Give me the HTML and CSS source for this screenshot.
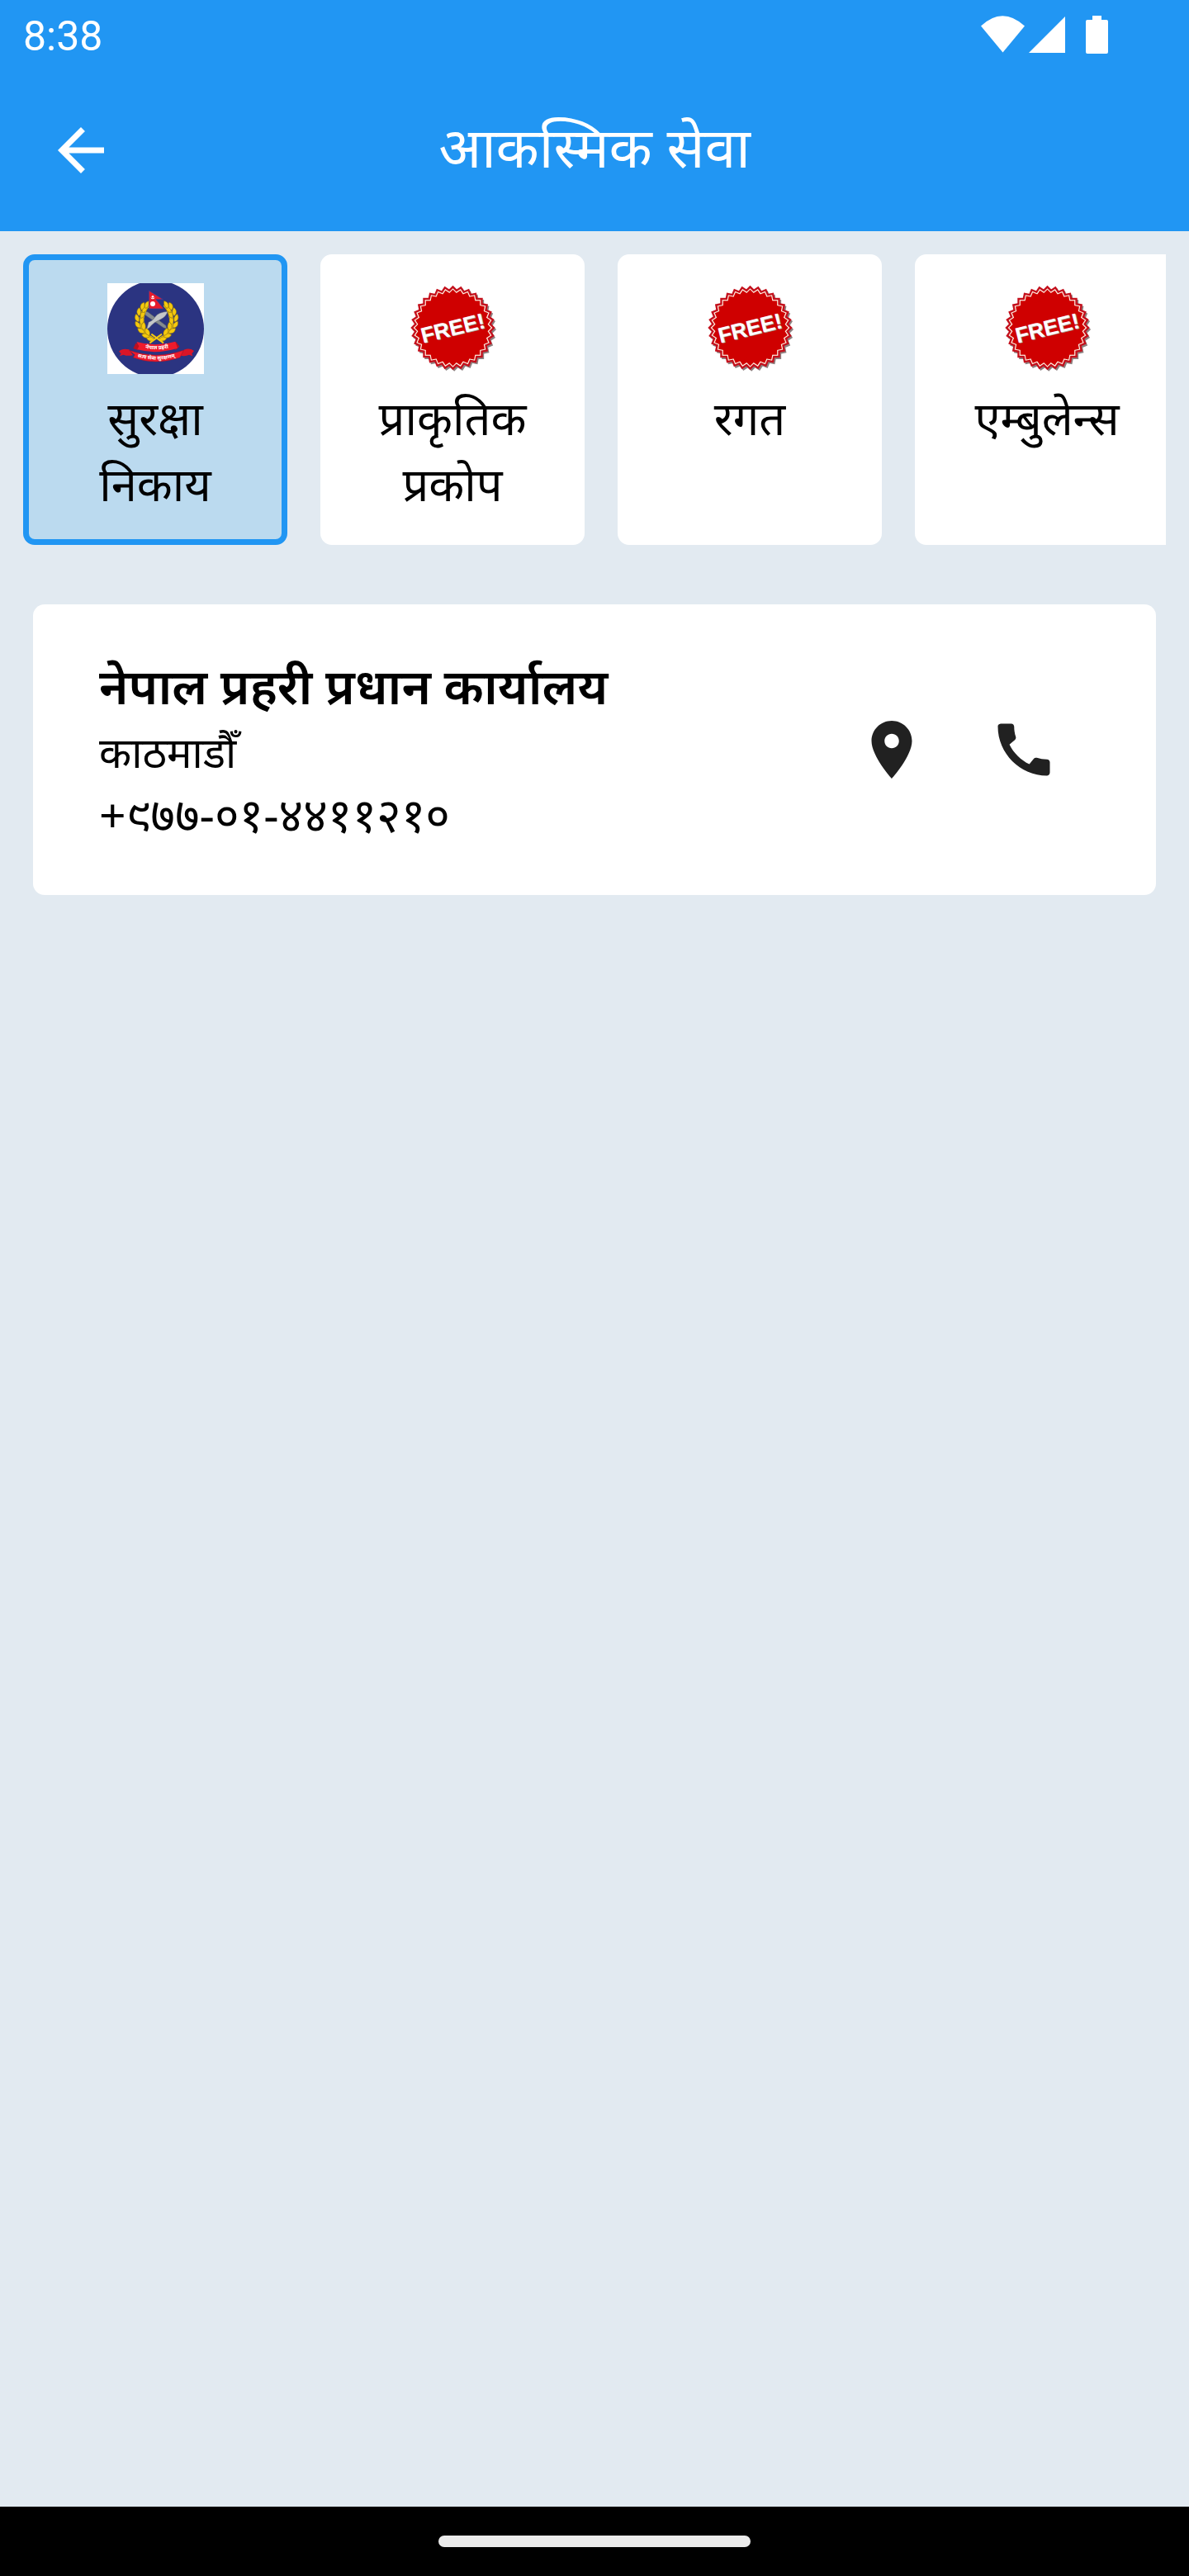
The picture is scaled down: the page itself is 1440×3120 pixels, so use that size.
FILE: index.html
```html
<!DOCTYPE html>
<html lang="ne">
<head>
    <meta charset="utf-8">
    <meta name="viewport" content="width=device-width, initial-scale=1">
    <title>आकस्मिक सेवा</title>
    <link rel="stylesheet" href="styles.css">
</head>
<body>
    <!-- shared drawings -->
    <svg class="defs" width="0" height="0" aria-hidden="true">
        <defs>
            <!-- 8 turned squares make a 32 point star -->
            <g id="burst">
                <rect x="-71" y="-71" width="142" height="142"/>
                <rect x="-71" y="-71" width="142" height="142" transform="rotate(11.25)"/>
                <rect x="-71" y="-71" width="142" height="142" transform="rotate(22.5)"/>
                <rect x="-71" y="-71" width="142" height="142" transform="rotate(33.75)"/>
                <rect x="-71" y="-71" width="142" height="142" transform="rotate(45)"/>
                <rect x="-71" y="-71" width="142" height="142" transform="rotate(56.25)"/>
                <rect x="-71" y="-71" width="142" height="142" transform="rotate(67.5)"/>
                <rect x="-71" y="-71" width="142" height="142" transform="rotate(78.75)"/>
            </g>
            <symbol id="free" viewBox="0 0 330 330">
                <use href="#burst" fill="#8d8080" transform="translate(170 168) scale(1.52)"/>
                <use href="#burst" fill="#c4101c" transform="translate(165 162) scale(1.53)"/>
                <use href="#burst" fill="#fff3e4" transform="translate(165 162) scale(1.43)"/>
                <use href="#burst" fill="#cf0000" transform="translate(165 162) scale(1.38)"/>
                <text class="free-text" x="165" y="190" transform="rotate(-14 165 165)">FREE!</text>
            </symbol>
            <path id="leaf" d="M0 12C-13 5-13-9-3-18 6-9 8 3 0 12z" fill="#f5c90d" stroke="#7a6414" stroke-width="1.5"/>
            <g id="branch">
                <path d="M-12 70C-62 50-66-20-30-58" fill="none" stroke="#f5c90d" stroke-width="15"/>
                <use href="#leaf" transform="translate(-20 66) rotate(-68)"/>
                <use href="#leaf" transform="translate(-36 54) rotate(-75)"/>
                <use href="#leaf" transform="translate(-30 44) rotate(-20)"/>
                <use href="#leaf" transform="translate(-53 38) rotate(-50)"/>
                <use href="#leaf" transform="translate(-45 24) rotate(5)"/>
                <use href="#leaf" transform="translate(-65 17) rotate(-30)"/>
                <use href="#leaf" transform="translate(-52 3) rotate(15)"/>
                <use href="#leaf" transform="translate(-68 -6) rotate(-12)"/>
                <use href="#leaf" transform="translate(-50 -18) rotate(32)"/>
                <use href="#leaf" transform="translate(-62 -28) rotate(8)"/>
                <use href="#leaf" transform="translate(-43 -37) rotate(42)"/>
                <use href="#leaf" transform="translate(-50 -48) rotate(24)"/>
                <use href="#leaf" transform="translate(-34 -54) rotate(32)"/>
            </g>
        </defs>
    </svg>

    <header>
        <div class="status-bar">
            <span class="time">8:38</span>
            <svg class="status-icons" viewBox="0 0 154 46" aria-hidden="true">
                <path d="M0 12.500Q26-12 53 12.500L26.500 44.500z"/>
                <path d="M102 1v44H58z"/>
                <path d="M135 0h11v5h6q2 0 2 2v37q0 2-2 2h-23q-2 0-2-2V7q0-2 2-2h6z"/>
            </svg>
        </div>
        <div class="app-bar">
            <button class="back" type="button" aria-label="पछाडि">
                <svg class="icon" viewBox="0 0 24 24"><path d="M20 11H7.830l5.590-5.590L12 4l-8 8 8 8 1.410-1.410L7.830 13H20z"/></svg>
            </button>
            <h1>आकस्मिक सेवा</h1>
        </div>
    </header>

    <main>
        <nav class="categories">
            <button class="category active" type="button" aria-pressed="true">
                <svg class="emblem" viewBox="0 0 351 330" aria-hidden="true">
                    <rect width="351" height="330" fill="#fff"/>
                    <circle cx="175.500" cy="166" r="175.500" fill="#2b3481"/>
                    <!-- crossed blades -->
                    <path d="M135 102l12 2 66 50 3 12-12-4-66-46z" fill="#858b90" stroke="#4c5158" stroke-width="1.500"/>
                    <path d="M143 167l7-25q18-8 24-20 12-17 45-19-5 19-25 28-28 12-41 30l-8 6z" fill="#c4c7c9" stroke="#62676d" stroke-width="1.500"/>
                    <!-- wreath -->
                    <use href="#branch" transform="translate(179 135)"/>
                    <use href="#branch" transform="translate(179 135) scale(-1 1)"/>
                    <path d="M154 217l44-32M204 217l-44-32" stroke="#f5c90d" stroke-width="6"/>
                    <!-- flag -->
                    <path d="M151 27l52 32h-26l28 34h-54z" fill="#e51b2c" stroke="#313f9b" stroke-width="2"/>
                    <path d="M157 50q8 9 16 0-2 8-8 8t-8-8z" fill="#fff"/>
                    <circle cx="165" cy="49" r="4" fill="#fff"/>
                    <circle cx="165" cy="75" r="9" fill="#fff"/>
                    <!-- ribbons -->
                    <path d="M103 218l-9 19 17 6 12-23zM250 214l12 16-14 13-13-23z" fill="#b90f20"/>
                    <path d="M106 213q70 20 141-1l8 24q-78 24-146 5l6-12z" fill="#ee1b2c"/>
                    <path d="M42 248q12-13 37-7l14 21q-22 4-34-2l-15 5 6-9zM315 246q-15-12-37-4l-14 21q21 4 33-3l13 5-3-9z" fill="#d91527"/>
                    <path d="M79 244q100 35 198 0l-13 26q-90 30-170 0l6-10z" fill="#ee1b2c" stroke="#9e1327" stroke-width="1.500"/>
                    <path id="motto-top" d="M115 232q66 18 130-2" fill="none"/>
                    <path id="motto-bottom" d="M94 264q84 28 168 0" fill="none"/>
                    <text class="motto"><textPath href="#motto-top" startOffset="50%">नेपाल प्रहरी</textPath></text>
                    <text class="motto"><textPath href="#motto-bottom" startOffset="50%">सत्य सेवा सुरक्षणम्</textPath></text>
                </svg>
                <span>सुरक्षा निकाय</span>
            </button>
            <button class="category" type="button">
                <svg class="emblem" aria-hidden="true"><use href="#free"/></svg>
                <span>प्राकृतिक प्रकोप</span>
            </button>
            <button class="category" type="button">
                <svg class="emblem" aria-hidden="true"><use href="#free"/></svg>
                <span>रगत</span>
            </button>
            <button class="category" type="button">
                <svg class="emblem" aria-hidden="true"><use href="#free"/></svg>
                <span>एम्बुलेन्स</span>
            </button>
        </nav>

        <section class="contacts">
            <article class="contact">
                <div class="info">
                    <h2>नेपाल प्रहरी प्रधान कार्यालय</h2>
                    <p>काठमाडौँ</p>
                    <p class="phone">+९७७-०१-४४११२१०</p>
                </div>
                <a class="action" href="#map" aria-label="नक्सा">
                    <svg class="icon" viewBox="0 0 24 24"><path d="M12 2C8.130 2 5 5.130 5 9c0 5.250 7 13 7 13s7-7.750 7-13c0-3.870-3.130-7-7-7zm0 9.500c-1.380 0-2.500-1.120-2.500-2.500s1.120-2.500 2.500-2.500 2.500 1.120 2.500 2.500-1.120 2.500-2.500 2.500z"/></svg>
                </a>
                <a class="action" href="tel:+977014411210" aria-label="फोन">
                    <svg class="icon" viewBox="0 0 24 24"><path d="M20.010 15.380c-1.230 0-2.420-.2-3.530-.56-.35-.12-.74-.03-1.010.24l-1.570 1.970c-2.830-1.350-5.480-3.900-6.890-6.830l1.950-1.660c.27-.28.35-.67.24-1.020-.37-1.110-.56-2.300-.56-3.530 0-.54-.45-.99-.99-.99H4.190C3.650 3 3 3.240 3 3.990 3 13.280 10.730 21 20.010 21c.71 0 .99-.63.99-1.180v-3.450c0-.54-.45-.99-.99-.99z"/></svg>
                </a>
            </article>
        </section>
    </main>

    <footer>
        <div class="home-bar"></div>
    </footer>
</body>
</html>
```

FILE: styles.css
```css
* {
    box-sizing: border-box;
}
body {
    margin: 0;
    min-height: 100vh;
    display: flex;
    flex-direction: column;
    background: #e2eaf1;
    color: #000;
    font-family: "Noto Sans", "Noto Sans Devanagari", sans-serif;
}
button {
    padding: 0;
    border: none;
    background: none;
    color: inherit;
    font-family: inherit;
    cursor: pointer;
}
h1, h2, p {
    margin: 0;
}
.defs {
    position: absolute;
}
.icon {
    display: block;
    width: 84px;
    height: 84px;
    fill: currentColor;
}

/* header */
header {
    background: #2196f3;
    color: #fff;
}
.status-bar {
    height: 84px;
    padding: 0 98px 0 28px;
    display: flex;
    justify-content: space-between;
    align-items: center;
}
.time {
    padding-top: 4px;
    font-family: Roboto, sans-serif;
    font-size: 50px;
}
.status-icons {
    width: 154px;
    height: 46px;
    fill: #fff;
}
.app-bar {
    height: 196px;
    padding: 0 56px;
    display: grid;
    grid-template-columns: 84px 1fr 84px;
    align-items: center;
}
h1 {
    padding-bottom: 10px;
    font-size: 68px;
    font-weight: 400;
    line-height: 84px;
    text-align: center;
}

/* categories */
main {
    flex: 1;
}
.categories {
    margin: 28px;
    display: flex;
    gap: 40px;
    overflow: hidden;
}
.category {
    flex: none;
    width: 320px;
    height: 352px;
    padding: 28px;
    display: flex;
    flex-direction: column;
    align-items: center;
    gap: 12px;
    border: 7px solid #fff;
    border-radius: 14px;
    background: #fff;
    font-size: 56px;
    line-height: 80px;
}
.category.active {
    border-color: #2196f3;
    background: #bbdaef;
}
.emblem {
    flex: none;
    width: 117px;
    height: 110px;
}
.free-text {
    fill: #fff;
    font-family: "Liberation Sans", Arial, sans-serif;
    font-size: 79px;
    font-weight: bold;
    text-anchor: middle;
    text-shadow: 1px 1px 0 #a8a0a0;
}
.motto {
    fill: #fff;
    font-size: 19px;
    font-weight: bold;
    text-anchor: middle;
}

/* contacts */
.contacts {
    padding: 44px 40px;
}
.contact {
    min-height: 352px;
    padding: 56px 80px;
    display: flex;
    align-items: center;
    border-radius: 14px;
    background: #fff;
}
.info {
    flex: 1;
    padding-bottom: 4px;
}
h2 {
    font-size: 60px;
    font-weight: 600;
    line-height: 84px;
}
.info p {
    font-size: 51px;
    line-height: 76px;
}
.info .phone {
    font-size: 57px;
}
.action {
    padding: 38px;
    color: #212121;
}

/* gesture bar */
footer {
    height: 84px;
    display: flex;
    justify-content: center;
    align-items: center;
    background: #000;
}
.home-bar {
    width: 378px;
    height: 14px;
    border-radius: 7px;
    background: #ebebeb;
}
```
